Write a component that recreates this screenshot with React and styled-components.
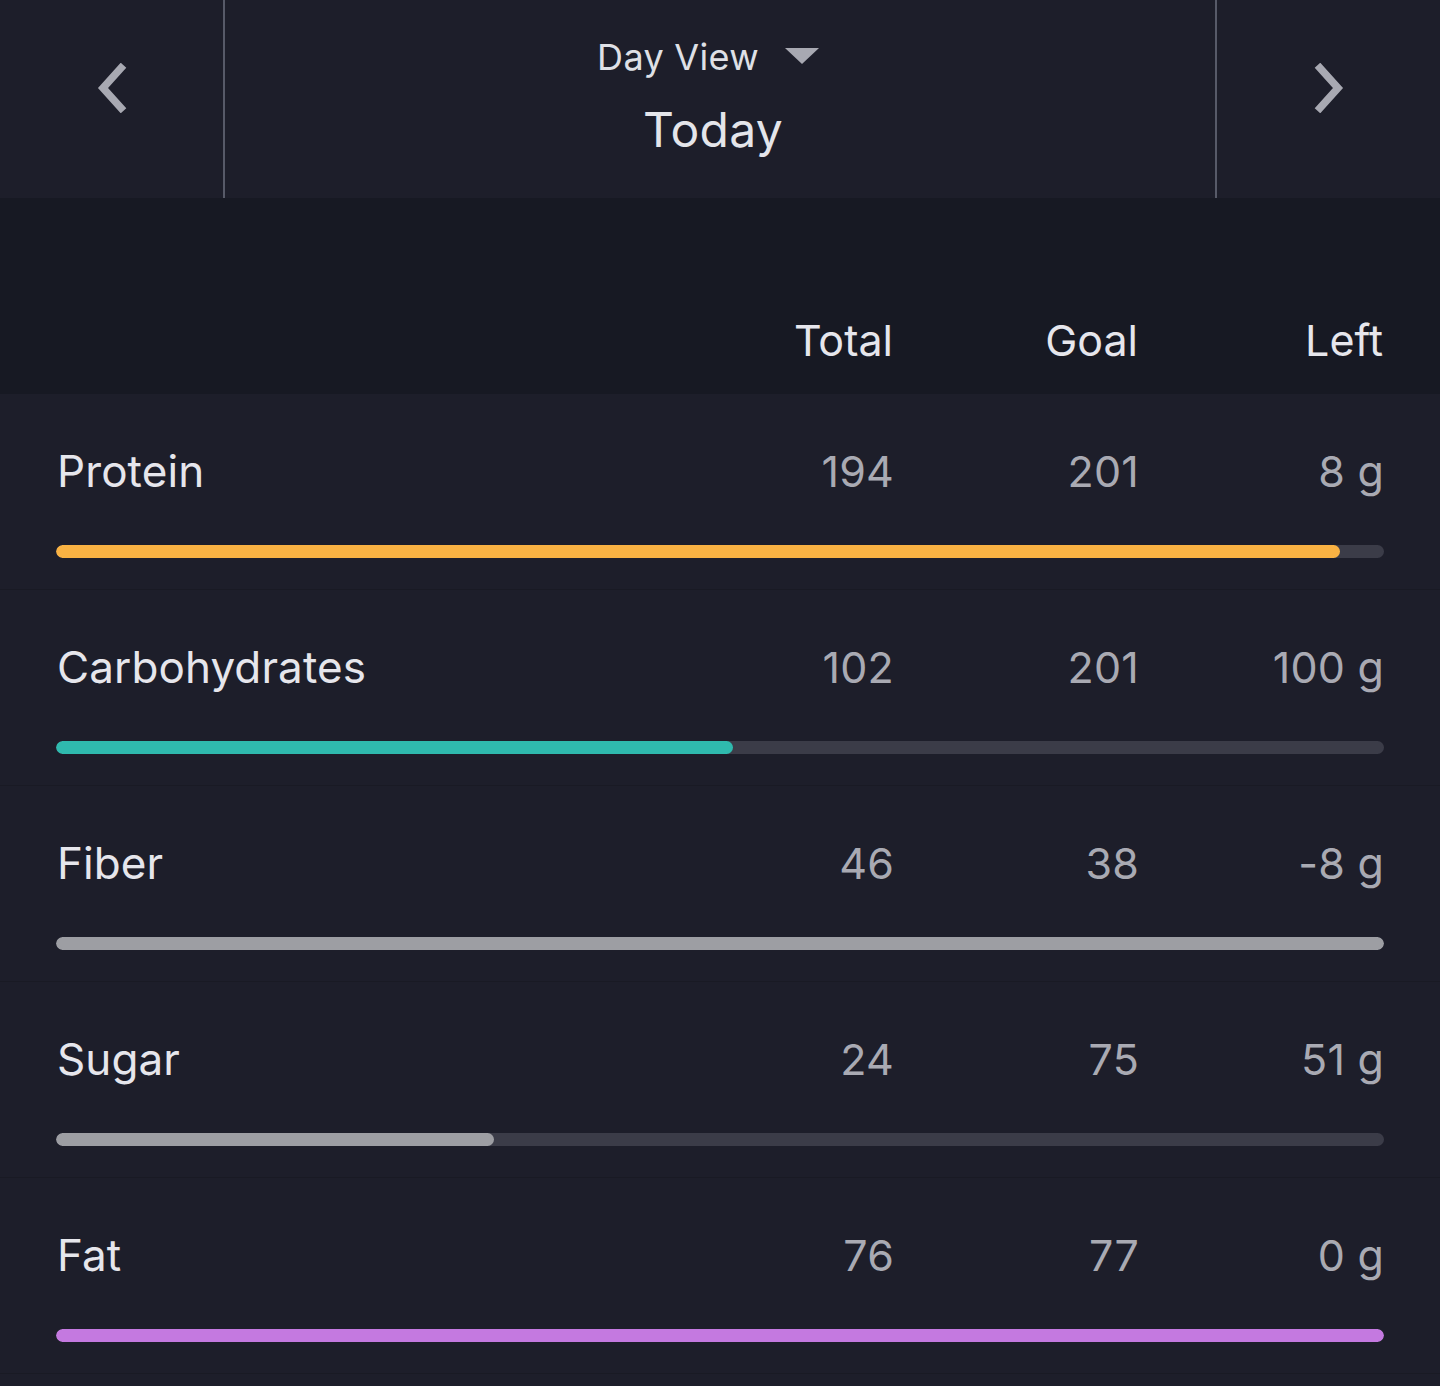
import React from 'react';
import styled, {createGlobalStyle} from 'styled-components';

const GlobalStyle = createGlobalStyle`
  html, body {
    margin: 0;
    padding: 0;
    background: #181a24;
  }
  body {
    font-family: Inter, "Noto Sans", sans-serif;
    -webkit-font-smoothing: antialiased;
  }
`

const macros = [
    {name: 'Protein', total: 194, goal: 201, left: '8 g', pct: 96.7, color: '#f9b243'},
    {name: 'Carbohydrates', total: 102, goal: 201, left: '100 g', pct: 51, color: '#2fbaae'},
    {name: 'Fiber', total: 46, goal: 38, left: '-8 g', pct: 100, color: '#9d9ea3'},
    {name: 'Sugar', total: 24, goal: 75, left: '51 g', pct: 33, color: '#9d9ea3'},
    {name: 'Fat', total: 76, goal: 77, left: '0 g', pct: 100, color: '#c479e0'},
]

const Chevron = ({dir}) => (
    <svg width="32" height="50" viewBox="0 0 32 50">
        <polyline
            points={dir === 'left' ? '26,5 8,25 26,45' : '6,5 24,25 6,45'}
            fill="none"
            stroke="#a8a9b2"
            strokeWidth="7.5"
            strokeLinecap="square"
            strokeLinejoin="miter"
        />
    </svg>
)

export default function App() {
    return (
        <Page>
            <GlobalStyle />
            <Header>
                <NavCell side="left">
                    <Chevron dir="left" />
                </NavCell>
                <Center>
                    <ViewPicker>
                        Day View
                        <Caret />
                    </ViewPicker>
                    <DateLabel>Today</DateLabel>
                </Center>
                <NavCell side="right">
                    <Chevron dir="right" />
                </NavCell>
            </Header>

            <ColumnBand>
                <span />
                <ColHead>Total</ColHead>
                <ColHead>Goal</ColHead>
                <ColHead>Left</ColHead>
            </ColumnBand>

            {macros.map(m => (
                <Row key={m.name}>
                    <Line>
                        <Label>{m.name}</Label>
                        <Value>{m.total}</Value>
                        <Value>{m.goal}</Value>
                        <Value>{m.left}</Value>
                    </Line>
                    <Track>
                        <Fill color={m.color} style={{width: m.pct + '%'}} />
                    </Track>
                </Row>
            ))}
            <Footer />
        </Page>
    )
}

const Page = styled.div`
  width: 1440px;
  min-height: 1386px;
  background: #181a24;
`

const Header = styled.header`
  display: grid;
  grid-template-columns: 225px 1fr 225px;
  height: 198px;
  background: #1d1e2a;
`

const NavCell = styled.div`
  display: flex;
  align-items: center;
  justify-content: center;
  padding-bottom: 22px;
  ${p => p.side === 'left'
    ? 'border-right: 2px solid #575a68; padding-right: 2px;'
    : 'border-left: 2px solid #575a68; padding-left: 2px;'}
`

const Center = styled.div`
  display: flex;
  flex-direction: column;
  align-items: center;
  padding-top: 34px;
`

const ViewPicker = styled.div`
  display: flex;
  align-items: center;
  gap: 26px;
  height: 46px;
  margin-left: -24px;
  font-size: 36px;
  color: #dfe0e6;
  letter-spacing: 0.3px;
`

const Caret = styled.span`
  width: 0;
  height: 0;
  border-left: 17px solid transparent;
  border-right: 17px solid transparent;
  border-top: 16px solid #a8a9b2;
  margin-bottom: 2px;
`

const DateLabel = styled.div`
  margin-top: 21px;
  margin-left: -14px;
  font-size: 48px;
  line-height: 58px;
  color: #e4e5ea;
  letter-spacing: 0.3px;
`

const grid = `
  display: grid;
  grid-template-columns: 1fr 245px 245px 245px;
  align-items: center;
`

const ColumnBand = styled.div`
  ${grid}
  height: 196px;
  box-sizing: border-box;
  padding: 117px 57px 0 57px;
  align-items: start;
  background: #171923;
`

const ColHead = styled.div`
  text-align: right;
  font-size: 43px;
  line-height: 50px;
  color: #e6e6ec;
`

const Row = styled.section`
  box-sizing: border-box;
  height: 196px;
  padding: 50px 56px 0 56px;
  background: #1d1e2a;
  border-bottom: 1px solid #191a24;
`

const Line = styled.div`
  ${grid}
  height: 50px;
`

const Label = styled.div`
  font-size: 44px;
  color: #e6e6ec;
  padding-left: 1px;
  letter-spacing: 0.1px;
`

const Value = styled.div`
  text-align: right;
  font-size: 43px;
  color: #a9aab3;
  letter-spacing: 0.2px;
`

const Track = styled.div`
  margin-top: 51px;
  height: 13px;
  border-radius: 7px;
  background: #3b3c48;
  overflow: hidden;
`

const Fill = styled.div`
  height: 100%;
  border-radius: 7px;
  background: ${p => p.color};
`

const Footer = styled.div`
  height: 16px;
  background: #1d1e2a;
`
